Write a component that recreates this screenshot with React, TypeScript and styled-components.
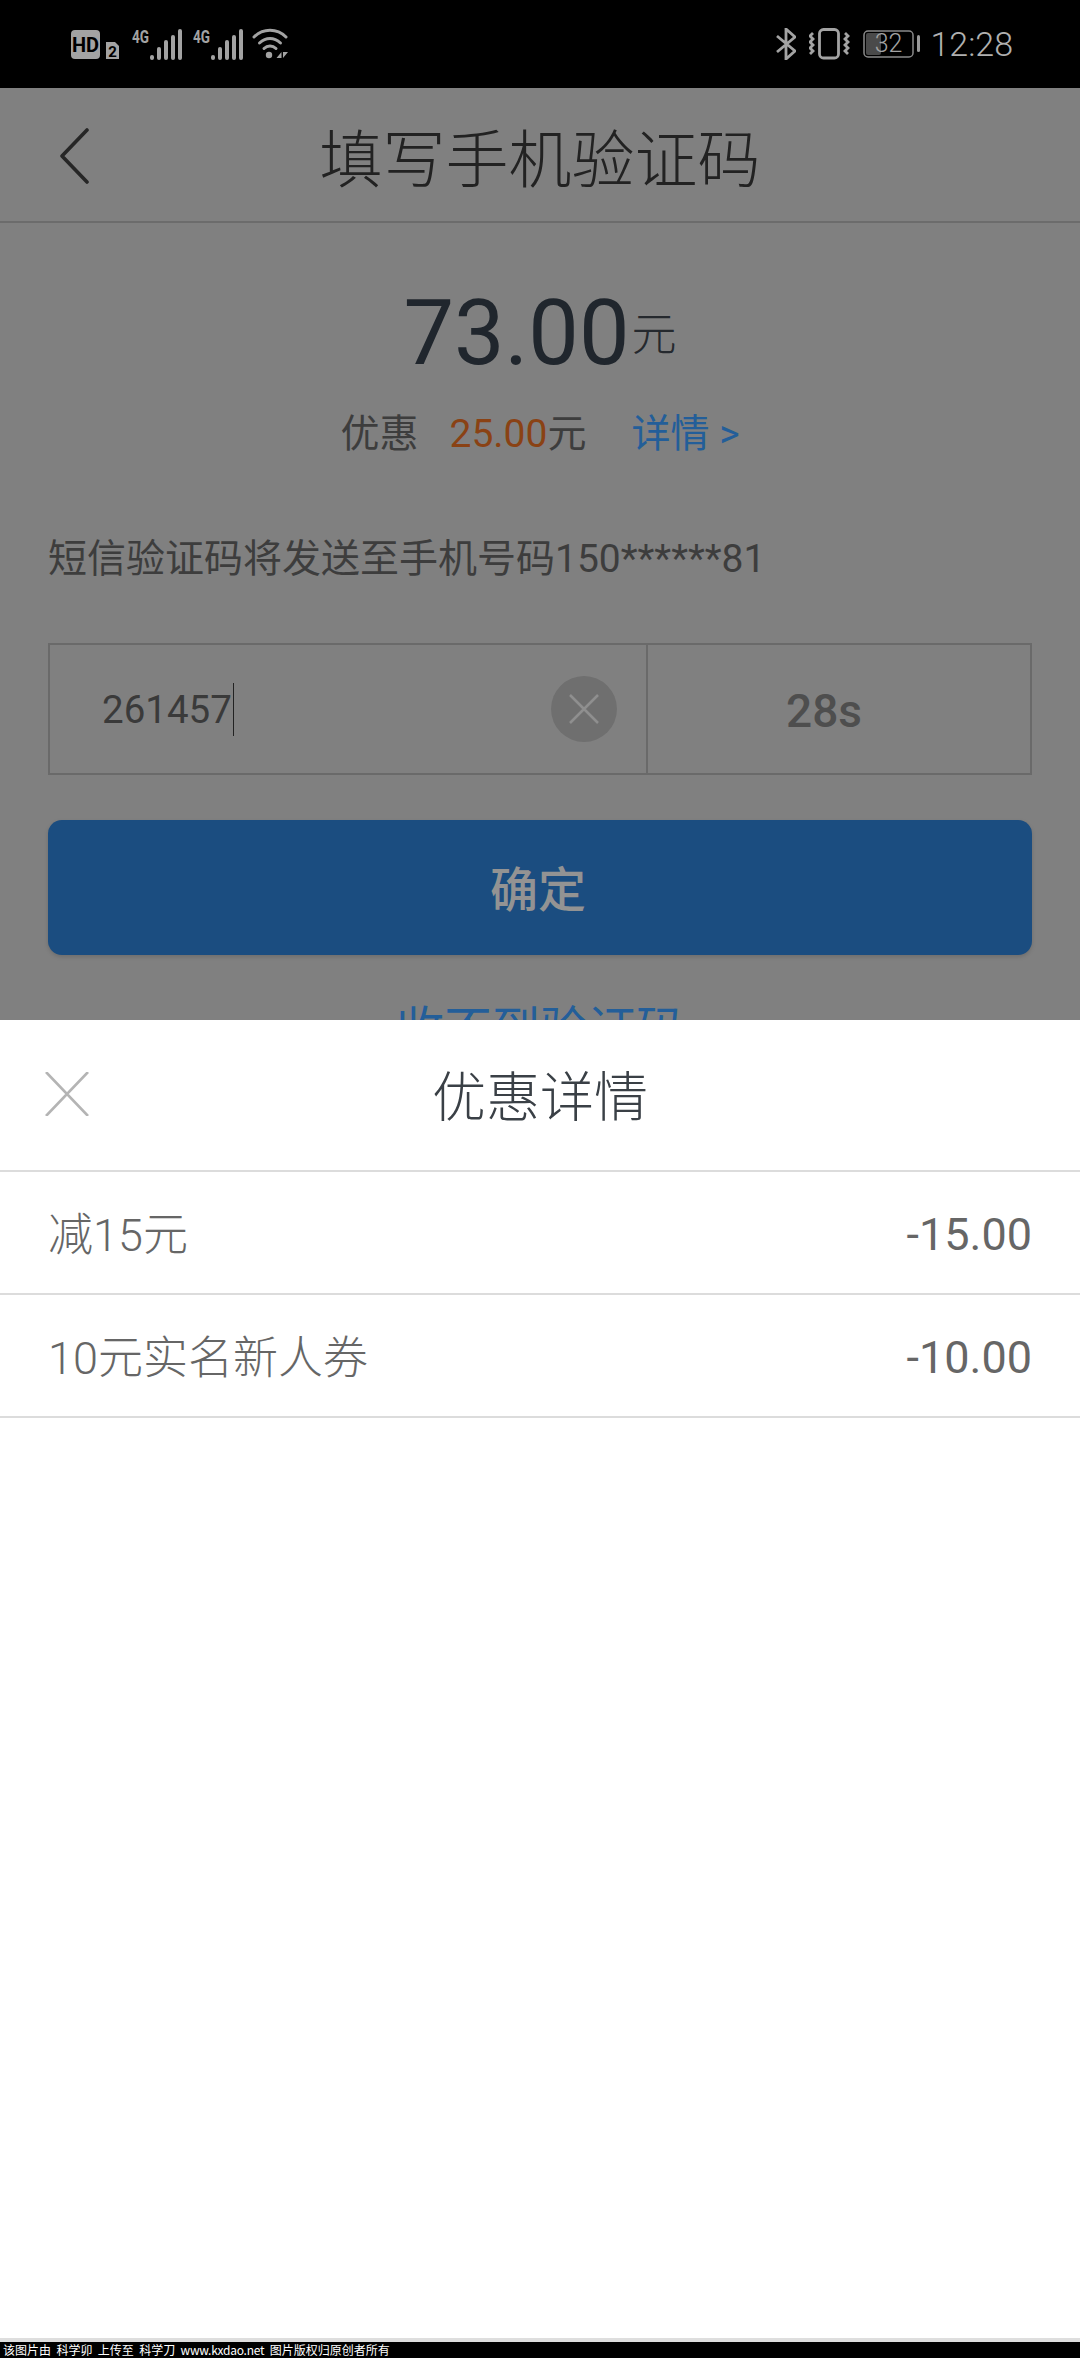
import React from "react";
import styled, { createGlobalStyle } from "styled-components";

const GlobalStyle = createGlobalStyle`
  html, body {
    margin: 0;
    padding: 0;
    background: #000;
  }
  * {
    box-sizing: border-box;
  }
`;

const FONT = `Roboto, "Noto Sans CJK SC", sans-serif`;

const Screen = styled.div`
  width: 1080px;
  height: 2358px;
  display: flex;
  flex-direction: column;
  overflow: hidden;
  font-family: ${FONT};
`;

const StatusBar = styled.div`
  height: 88px;
  flex: none;
  background: #000;
  color: #a3a3a3;
  display: flex;
  align-items: center;
  justify-content: space-between;
  padding: 0 67px 0 71px;
`;

const StatusGroup = styled.div<{ $gap: number }>`
  display: flex;
  align-items: center;
  gap: ${(p) => p.$gap}px;
`;

const Clock = styled.span`
  margin-left: -3px;
  font-size: 34px;
  font-weight: 300;
  line-height: 88px;
  color: #b0b0b0;
`;

const Stage = styled.div`
  flex: 1;
  position: relative;
  background: #808080;
  overflow: hidden;
`;

const NavBar = styled.div`
  height: 135px;
  position: relative;
  display: flex;
  align-items: center;
  justify-content: center;
  border-bottom: 2px solid #6c6c6c;
`;

const BackIcon = styled.svg`
  position: absolute;
  left: 60px;
  top: 40px;
  width: 30px;
  height: 56px;
`;

const NavTitle = styled.h1`
  margin: 0;
  font-size: 63px;
  font-weight: 300;
  color: #222;
`;

const Summary = styled.div`
  display: flex;
  flex-direction: column;
  align-items: center;
`;

const AmountRow = styled.div`
  display: flex;
  align-items: baseline;
  margin-top: 58px;
  height: 106px;
  color: #20262d;
`;

const Amount = styled.span`
  font-size: 90px;
  line-height: 106px;
`;

const AmountUnit = styled.span`
  position: relative;
  top: -13px;
  font-size: 45px;
  font-weight: 300;
  color: #25292e;
  margin-left: 2px;
`;

const DiscountRow = styled.div`
  display: flex;
  align-items: baseline;
  margin-top: 21px;
  height: 52px;
  font-size: 39px;
  line-height: 52px;
  color: #3d3d3d;
`;

const DiscountValue = styled.span`
  color: #8a4214;
  margin-left: 31px;
`;

const DetailLink = styled.span`
  color: #235e99;
  margin-left: 45px;
`;

const SmsHint = styled.p`
  margin: 73px 0 0 48px;
  font-size: 39px;
  line-height: 52px;
  color: #3d3d3d;
`;

const CodeBox = styled.div`
  margin: 58px 48px 0;
  height: 132px;
  display: flex;
  border: 2px solid #6a6a6a;
`;

const CodeField = styled.div`
  flex: none;
  width: 598px;
  position: relative;
  display: flex;
  align-items: center;
  padding-left: 52px;
  border-right: 2px solid #6a6a6a;
  font-size: 38.5px;
  color: #3a3a3a;
`;

const Caret = styled.span`
  width: 1px;
  height: 53px;
  margin-left: 1px;
  background: #222;
`;

const ClearButton = styled.div`
  position: absolute;
  right: 29px;
  top: 31px;
  width: 66px;
  height: 66px;
  border-radius: 50%;
  background: #6f6f6f;
  display: flex;
  align-items: center;
  justify-content: center;
`;

const Countdown = styled.div`
  flex: 1;
  display: flex;
  align-items: center;
  justify-content: center;
  padding: 4px 30px 0 0;
  font-size: 46px;
  font-weight: 500;
  color: #4e4e4e;
`;

const ConfirmButton = styled.div`
  margin: 45px 48px 0;
  height: 135px;
  border-radius: 14px;
  background: #1b4d80;
  box-shadow: 0 2px 4px rgba(0, 0, 0, 0.15);
  display: flex;
  align-items: center;
  justify-content: center;
  padding: 0 4px 3px 0;
  font-size: 48px;
  font-weight: 500;
  color: #939393;
`;

const NoCodeLink = styled.div`
  margin-top: 43px;
  text-align: center;
  font-size: 48px;
  line-height: 64px;
  color: #235e99;
`;

const Sheet = styled.div`
  position: absolute;
  left: 0;
  right: 0;
  bottom: 0;
  top: 932px;
  background: #fff;
`;

const SheetHeader = styled.div`
  height: 152px;
  position: relative;
  display: flex;
  align-items: center;
  justify-content: center;
  padding-bottom: 3px;
  border-bottom: 2px solid #dcdcdc;
`;

const SheetClose = styled.svg`
  position: absolute;
  left: 45px;
  top: 52px;
  width: 44px;
  height: 44px;
`;

const SheetTitle = styled.h2`
  margin: 0;
  font-size: 54px;
  font-weight: 300;
  color: #3a4046;
`;

const DiscountItem = styled.div`
  height: 123px;
  display: flex;
  align-items: center;
  justify-content: space-between;
  padding: 0 48px;
  border-bottom: 2px solid #dcdcdc;
  font-size: 45px;
  font-weight: 300;
  color: #666;
`;

const DiscountName = styled.span`
  padding-bottom: 2px;
`;

const DiscountAmount = styled.span`
  padding-top: 4px;
  font-weight: 400;
`;

const Watermark = styled.div`
  height: 20px;
  flex: none;
  background: #000;
  border-top: 4px solid #dedede;
  padding-left: 3px;
  font-size: 12px;
  line-height: 16px;
  color: #fff;
  white-space: pre;
  font-family: "Noto Sans CJK SC", sans-serif;
`;

const WatermarkSite = styled.span`
  letter-spacing: -0.25px;
`;

const WifiIcon = styled.svg`
  margin-left: -2px;
`;

const HdBadge = () => (
  <svg width="50" height="32" viewBox="0 0 50 32">
    <rect x="0" y="2" width="29" height="29" rx="4" fill="#a3a3a3" />
    <text x="14.5" y="23.5" textAnchor="middle" fontSize="20" fontWeight="700" fontFamily="Roboto, sans-serif" fill="#000">
      HD
    </text>
    <path d="M35 14h9l4 4v13H35z" fill="#a3a3a3" />
    <text x="41.5" y="29" textAnchor="middle" fontSize="15" fontWeight="700" fontFamily="Roboto, sans-serif" fill="#000">
      2
    </text>
  </svg>
);

// five bars, the first one is just a dot
const signalBars = [5, 13, 20, 25, 31];

const SignalIcon = () => (
  <svg width="50" height="40" viewBox="0 -4 50 40" fill="currentColor">
    <text x="0" y="14.5" fontSize="19" fontWeight="700" fontFamily="Roboto, sans-serif" textLength="17" lengthAdjust="spacingAndGlyphs">
      4G
    </text>
    {signalBars.map((h, i) => (
      <rect key={i} x={18 + i * 7} y={32 - h} width="4" height={h} rx="2" />
    ))}
  </svg>
);

const WifiGlyph = () => (
  <WifiIcon width="36" height="32" viewBox="0 0 36 32" fill="none" stroke="currentColor" strokeLinecap="round" strokeWidth="3">
    <path d="M2 9C11 0 25 0 34 9" />
    <path d="M7.5 15C14 9 22 9 28.5 15" />
    <path d="M12 20.5C15.5 17 20.5 17 24 20.5" />
    <circle cx="17" cy="27" r="3.2" fill="currentColor" stroke="none" />
    <path d="M29.5 24v6h-5zM31 24v6l5-6z" fill="currentColor" stroke="none" />
  </WifiIcon>
);

const BluetoothIcon = () => (
  <svg width="20" height="32" viewBox="0 0 20 32" fill="none" stroke="currentColor" strokeWidth="2.8">
    <path d="M1 8l18 15-9 8V1l9 8L1 24" />
  </svg>
);

const VibrateIcon = () => (
  <svg width="41" height="32" viewBox="0 0 41 32" fill="none" stroke="currentColor" strokeWidth="2.8">
    <rect x="10.5" y="1.5" width="19" height="28.5" rx="4" />
    <path d="M4 5L1 8l3 3-3 3 3 3-3 3 3 3-3 3M36 5l3 3-3 3 3 3-3 3 3 3-3 3 3 3" />
  </svg>
);

const BatteryIcon = () => (
  <svg width="57" height="28" viewBox="0 0 57 28">
    <rect x="1" y="1" width="49" height="26" rx="4" fill="none" stroke="#8a8a8a" strokeWidth="1.5" />
    <rect x="3" y="3" width="15" height="22" rx="2" fill="#4a4a4a" />
    <text x="25.5" y="22" textAnchor="middle" fontSize="25" fontWeight="300" fontFamily="Roboto, sans-serif" fill="#a3a3a3">
      32
    </text>
    <rect x="54" y="5" width="3" height="17" rx="1.5" fill="#999" />
  </svg>
);

const discounts = [
  { name: "减15元", value: "-15.00" },
  { name: "10元实名新人券", value: "-10.00" },
];

const App: React.FC = () => {
  return (
    <Screen>
      <GlobalStyle />
      <StatusBar>
        <StatusGroup $gap={11}>
          <HdBadge />
          <SignalIcon />
          <SignalIcon />
          <WifiGlyph />
        </StatusGroup>
        <StatusGroup $gap={13}>
          <BluetoothIcon />
          <VibrateIcon />
          <BatteryIcon />
          <Clock>12:28</Clock>
        </StatusGroup>
      </StatusBar>

      <Stage>
        <NavBar>
          <BackIcon viewBox="0 0 30 56" fill="none" stroke="#262626" strokeWidth="3.6" strokeLinecap="round" strokeLinejoin="round">
            <path d="M27 2L2 28l25 26" />
          </BackIcon>
          <NavTitle>填写手机验证码</NavTitle>
        </NavBar>

        <Summary>
          <AmountRow>
            <Amount>73.00</Amount>
            <AmountUnit>元</AmountUnit>
          </AmountRow>
          <DiscountRow>
            优惠
            <DiscountValue>25.00</DiscountValue>元
            <DetailLink>详情 &gt;</DetailLink>
          </DiscountRow>
        </Summary>

        <SmsHint>短信验证码将发送至手机号码150******81</SmsHint>

        <CodeBox>
          <CodeField>
            261457
            <Caret />
            <ClearButton>
              <svg width="30" height="30" viewBox="0 0 30 30" stroke="#8f8f8f" strokeWidth="2.5">
                <path d="M1 1l28 28M29 1L1 29" />
              </svg>
            </ClearButton>
          </CodeField>
          <Countdown>28s</Countdown>
        </CodeBox>

        <ConfirmButton>确定</ConfirmButton>
        <NoCodeLink>收不到验证码</NoCodeLink>

        <Sheet>
          <SheetHeader>
            <SheetClose viewBox="0 0 44 44" stroke="#b4b4b4" strokeWidth="2.6">
              <path d="M1 0l42 44M43 0L1 44" />
            </SheetClose>
            <SheetTitle>优惠详情</SheetTitle>
          </SheetHeader>
          {discounts.map((item) => (
            <DiscountItem key={item.name}>
              <DiscountName>{item.name}</DiscountName>
              <DiscountAmount>{item.value}</DiscountAmount>
            </DiscountItem>
          ))}
        </Sheet>
      </Stage>

      <Watermark>
        该图片由  科学卯  上传至  科学刀  <WatermarkSite>www.kxdao.net</WatermarkSite>  图片版权归原创者所有
      </Watermark>
    </Screen>
  );
};

export default App;
